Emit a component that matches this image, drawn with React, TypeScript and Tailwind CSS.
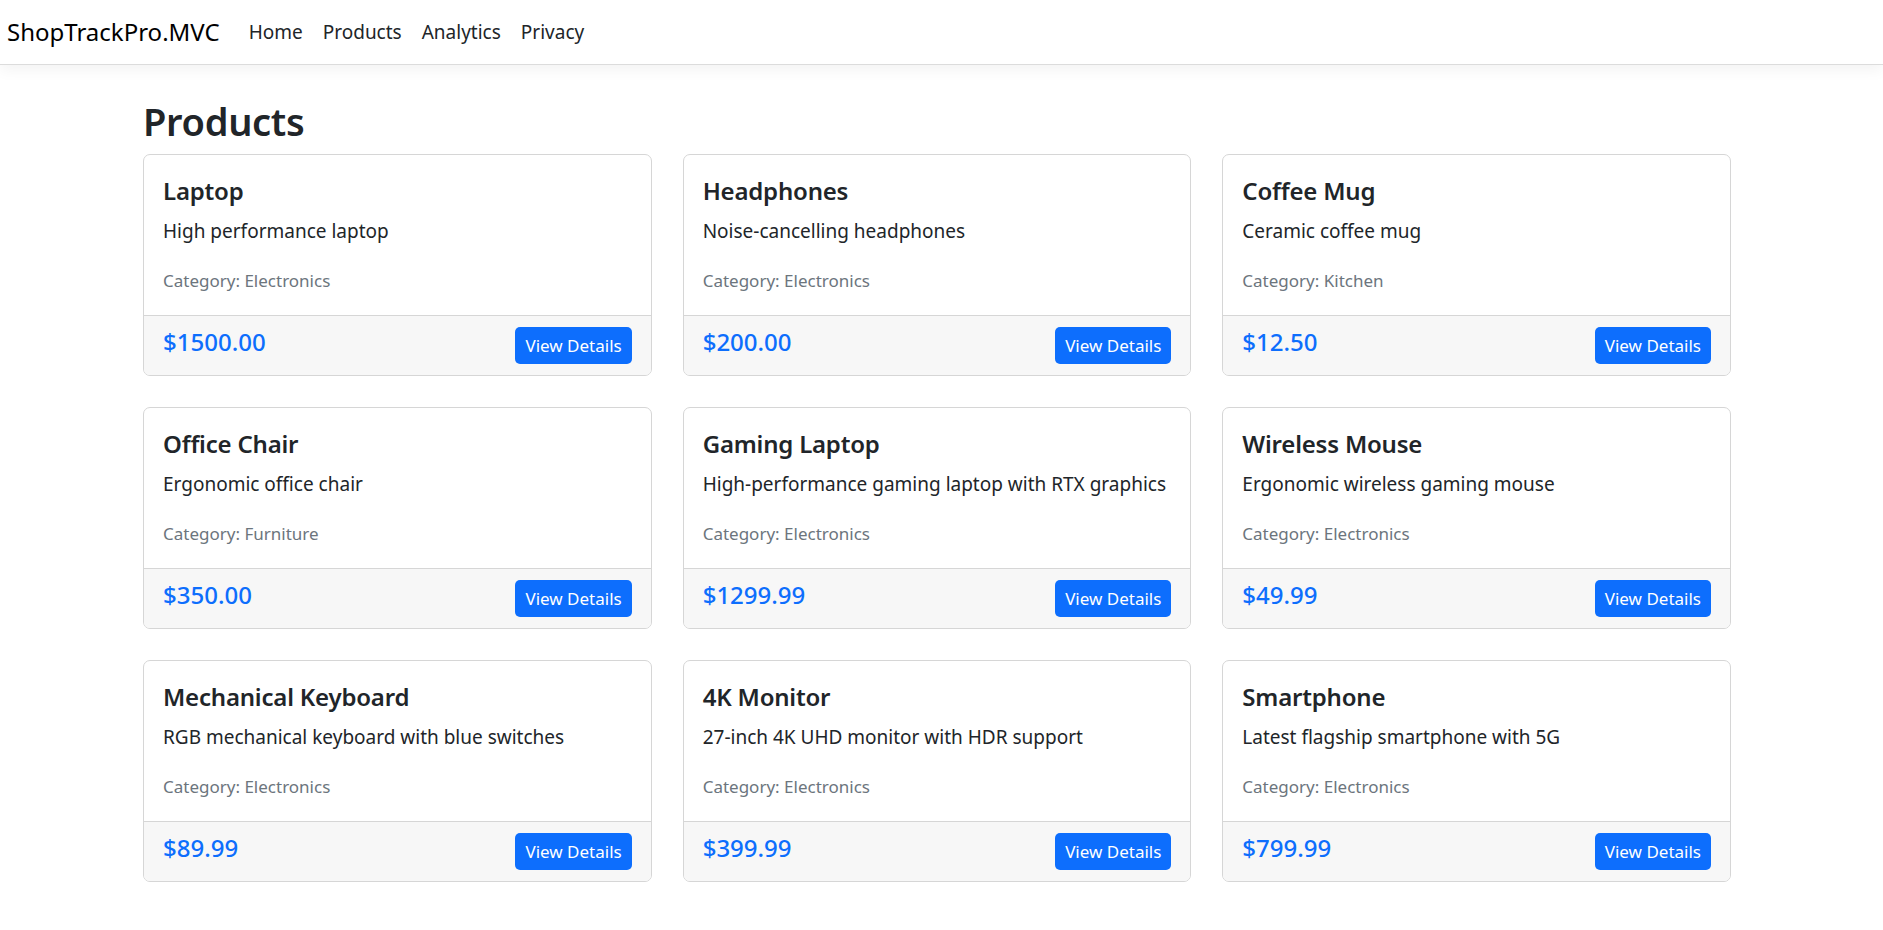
import React from 'react'

const PRODUCTS = [
  { name: 'Laptop', desc: 'High performance laptop', category: 'Electronics', price: '$1500.00' },
  { name: 'Headphones', desc: 'Noise-cancelling headphones', category: 'Electronics', price: '$200.00' },
  { name: 'Coffee Mug', desc: 'Ceramic coffee mug', category: 'Kitchen', price: '$12.50' },
  { name: 'Office Chair', desc: 'Ergonomic office chair', category: 'Furniture', price: '$350.00' },
  { name: 'Gaming Laptop', desc: 'High-performance gaming laptop with RTX graphics', category: 'Electronics', price: '$1299.99' },
  { name: 'Wireless Mouse', desc: 'Ergonomic wireless gaming mouse', category: 'Electronics', price: '$49.99' },
  { name: 'Mechanical Keyboard', desc: 'RGB mechanical keyboard with blue switches', category: 'Electronics', price: '$89.99' },
  { name: '4K Monitor', desc: '27-inch 4K UHD monitor with HDR support', category: 'Electronics', price: '$399.99' },
  { name: 'Smartphone', desc: 'Latest flagship smartphone with 5G', category: 'Electronics', price: '$799.99' },
]

const NAV_LINKS = ['Home', 'Products', 'Analytics', 'Privacy']

function ProductCard({ name, desc, category, price }: (typeof PRODUCTS)[number]) {
  return (
    <div className="flex flex-col rounded-[7px] border border-[#d6d6d6] bg-white overflow-hidden">
      <div className="px-[19px] pt-[21px] pb-[21px]">
        <h5 className="text-[24px] leading-[30px] font-semibold tracking-[-0.2px] text-[#212529] mb-[10px]">{name}</h5>
        <p className="text-[19px] leading-[30px] text-[#212529] mb-[22px]">{desc}</p>
        <p className="text-[17px] leading-[26px] text-[#6c757d]">Category: {category}</p>
      </div>
      <div className="flex items-start justify-between border-t border-[#d6d6d6] bg-[#f7f7f7] px-[19px] py-[11px]">
        <span className="text-[24px] leading-[30px] font-medium text-[#0d6efd]">{price}</span>
        <button className="h-[37px] rounded-[5px] bg-[#0d6efd] px-[10px] text-[17px] leading-[25px] text-white">
          View Details
        </button>
      </div>
    </div>
  )
}

export default function App() {
  return (
    <div className="min-h-[930px] bg-white text-[#212529] font-['Noto_Sans',sans-serif]">
      <nav className="flex h-[65px] items-center border-b border-[#dcdcdc] bg-white px-[7px] shadow-[0_5px_14px_rgba(0,0,0,0.05)]">
        <a className="mr-[19px] text-[24px] leading-[36px] text-black">ShopTrackPro.MVC</a>
        <ul className="flex">
          {NAV_LINKS.map((link) => (
            <li key={link}>
              <a className="block px-[10px] text-[19px] leading-[29px] text-[#212529]">{link}</a>
            </li>
          ))}
        </ul>
      </nav>

      <main className="ml-[143px] w-[1588px] pb-[40px]">
        <h2 className="mt-[33px] text-[38px] leading-[46px] font-semibold tracking-[-0.3px] text-[#212529]">Products</h2>
        <div className="mt-[10px] grid grid-cols-3 gap-x-[31px] gap-y-[31px]">
          {PRODUCTS.map((p) => (
            <ProductCard key={p.name} {...p} />
          ))}
        </div>
      </main>
    </div>
  )
}
